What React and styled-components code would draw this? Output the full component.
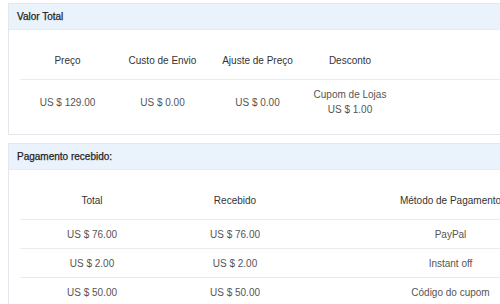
import styled, { createGlobalStyle } from "styled-components";

const GlobalStyle = createGlobalStyle`
  body {
    margin: 0;
    background: #fff;
    font-family: "Liberation Sans", Arial, sans-serif;
  }
`;

const Page = styled.div`
  display: flex;
  flex-direction: column;
  gap: 8px;
  padding: 3px 0 0 8px;
  width: 588px;
`;

const Panel = styled.section`
  border: 1px solid #e3e7ed;
  background: #fff;
`;

const PanelHeader = styled.div`
  height: 25px;
  line-height: 25px;
  padding-left: 8px;
  background: #eaf2fc;
  border-bottom: 1px solid #e6ebf2;
  font-size: 10px;
  font-weight: normal;
  color: #1f1f1f;
  -webkit-text-stroke: 0.25px #1f1f1f;
`;

const Table = styled.table`
  border-collapse: collapse;
  margin: 12px 0 11px 11px;
  width: calc(100% - 11px);
  table-layout: fixed;
  font-size: 10px;
  line-height: 15px;
`;

const Th = styled.th`
  width: ${(p) => (p.$w ? `${p.$w}px` : "auto")};
  padding: 11px 0;
  font-weight: normal;
  color: #333;
  text-align: center;
  border-bottom: 1px solid #ebebeb;
`;

const Td = styled.td`
  padding: 7px 0 6px;
  color: #555;
  text-align: center;
  border-bottom: ${(p) => (p.$last ? "none" : "1px solid #ebebeb")};
`;

const totals = {
  cols: [
    { label: "Preço", w: 95 },
    { label: "Custo de Envio", w: 95 },
    { label: "Ajuste de Preço", w: 95 },
    { label: "Desconto", w: 90 },
    { label: "", w: 0 },
  ],
  row: ["US $ 129.00", "US $ 0.00", "US $ 0.00", ["Cupom de Lojas", "US $ 1.00"], ""],
};

const payments = {
  cols: [
    { label: "Total", w: 144 },
    { label: "Recebido", w: 142 },
    { label: "Método de Pagamento", w: 0 },
  ],
  rows: [
    ["US $ 76.00", "US $ 76.00", "PayPal"],
    ["US $ 2.00", "US $ 2.00", "Instant off"],
    ["US $ 50.00", "US $ 50.00", "Código do cupom"],
  ],
};

export default function App() {
  return (
    <>
      <GlobalStyle />
      <Page>
        <Panel>
          <PanelHeader>Valor Total</PanelHeader>
          <Table>
            <thead>
              <tr>
                {totals.cols.map((c, i) => (
                  <Th key={i} $w={c.w}>
                    {c.label}
                  </Th>
                ))}
              </tr>
            </thead>
            <tbody>
              <tr>
                {totals.row.map((v, i) => (
                  <Td key={i} $last>
                    {Array.isArray(v)
                      ? v.map((line, j) => <div key={j}>{line}</div>)
                      : v}
                  </Td>
                ))}
              </tr>
            </tbody>
          </Table>
        </Panel>
        <Panel>
          <PanelHeader>Pagamento recebido:</PanelHeader>
          <Table>
            <thead>
              <tr>
                {payments.cols.map((c, i) => (
                  <Th key={i} $w={c.w}>
                    {c.label}
                  </Th>
                ))}
              </tr>
            </thead>
            <tbody>
              {payments.rows.map((row, r) => (
                <tr key={r}>
                  {row.map((v, i) => (
                    <Td key={i} $last={r === payments.rows.length - 1}>
                      {v}
                    </Td>
                  ))}
                </tr>
              ))}
            </tbody>
          </Table>
        </Panel>
      </Page>
    </>
  );
}
